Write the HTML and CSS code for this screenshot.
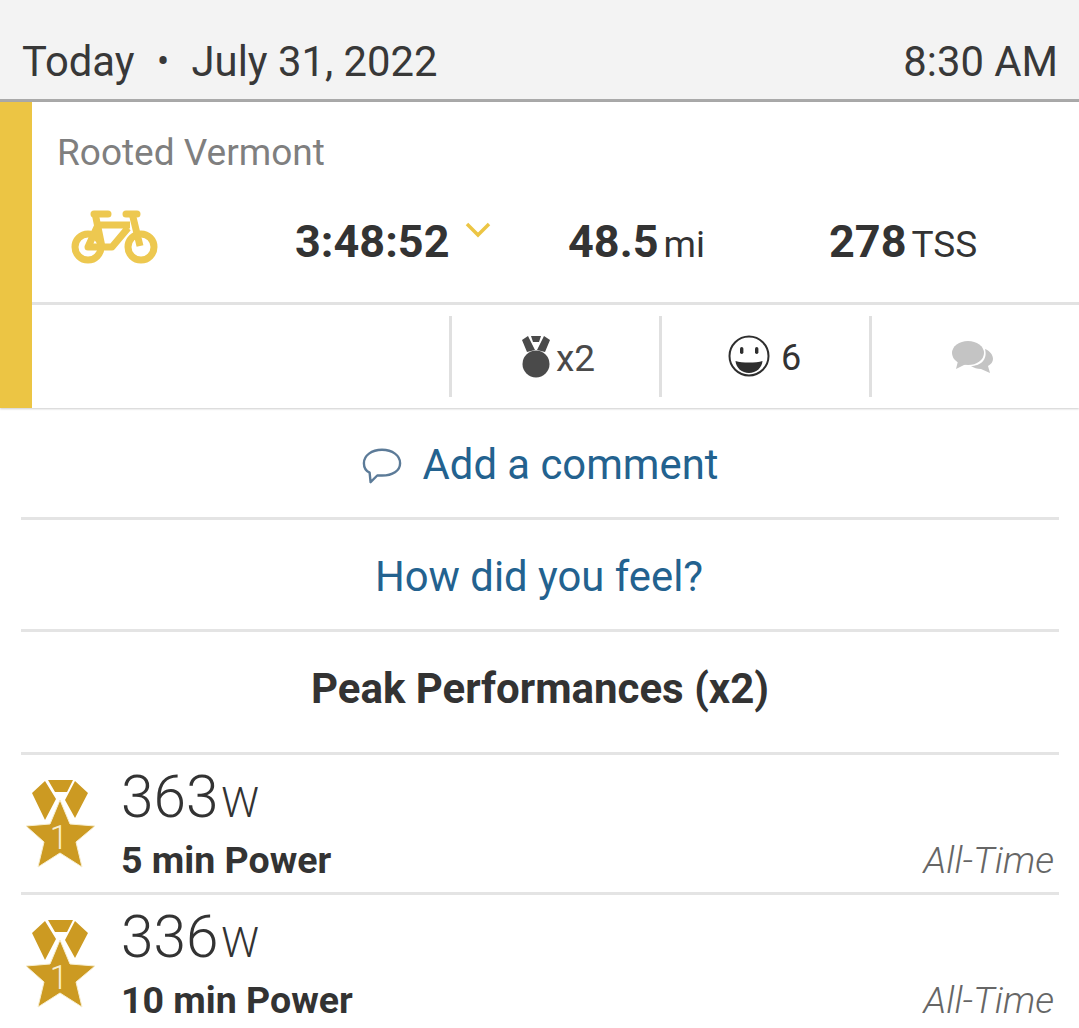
FILE: index.html
```html
<!DOCTYPE html>
<html lang="en">
<head>
<meta charset="utf-8">
<title>Workout</title>
<link rel="stylesheet" href="styles.css">
</head>
<body>
<header class="date-bar">
  <div class="date"><span>Today</span><span class="dot">•</span><span>July 31, 2022</span></div>
  <div>8:30 AM</div>
</header>
<section class="card">
  <div class="card-bar"></div>
  <div class="card-body">
    <div class="title">Rooted Vermont</div>
    <div class="stats">
      <svg class="bike" viewBox="0 0 88 56" aria-hidden="true">
        <g fill="none" stroke="#edc850" stroke-width="7" stroke-linejoin="round">
          <circle cx="17" cy="39" r="13"/>
          <circle cx="70" cy="39" r="13"/>
          <path d="M24 5 L31 39 H17 L27 17 H59 M57 20 L41 39 H17 M61 5 L69 38"/>
        </g>
        <path d="M23 6 H37 M55 6 H66" fill="none" stroke="#edc850" stroke-width="7" stroke-linecap="round"/>
      </svg>
      <div class="stat stat-time"><b>3:48:52</b>
        <svg class="chev" viewBox="0 0 26 16" aria-hidden="true"><path d="M2 2 L13 13 L24 2" fill="none" stroke="#ecc544" stroke-width="3.5"/></svg>
      </div>
      <div class="stat stat-dist"><b>48.5</b><span>mi</span></div>
      <div class="stat stat-tss"><b>278</b><span>TSS</span></div>
    </div>
    <div class="actions">
      <div class="action">
        <svg class="medal" viewBox="0 0 28 42" aria-hidden="true">
          <path d="M0 4 L6 0 L13 14 L5 16 Z M28 4 L22 0 L15 14 L23 16 Z M9 0 H19 L17 6 H11 Z" fill="#4a4a4a"/>
          <ellipse cx="14" cy="28" rx="13.5" ry="13.5" fill="#4a4a4a"/>
        </svg>
        <span class="x2">x2</span>
      </div>
      <div class="action">
        <svg class="smile" viewBox="0 0 42 42" aria-hidden="true">
          <circle cx="21" cy="21" r="19.5" fill="none" stroke="#2e2e2e" stroke-width="2"/>
          <rect x="12" y="12" width="3.4" height="7" rx="1.7" fill="#2e2e2e"/>
          <rect x="27" y="12" width="3.4" height="7" rx="1.7" fill="#2e2e2e"/>
          <path d="M7.500 26 C14 28 28 28 34.500 26 C34 33 28 38 21 38 C14 38 8 33 7.500 26 Z" fill="#2e2e2e"/>
        </svg>
        <span class="six">6</span>
      </div>
      <div class="action">
        <svg class="chat" viewBox="0 0 41 32" aria-hidden="true">
          <path d="M33 8 C38 10 41 14 41 18 C41 21 39 23 36 25 L38 32 L29 28 C25 28 22 27 19 25 C28 25 36 19 33 8 Z" fill="#c4c4c4"/>
          <ellipse cx="16" cy="12" rx="16" ry="12" fill="#c4c4c4"/>
          <path d="M6 20 L4 28 L14 23 Z" fill="#c4c4c4"/>
        </svg>
      </div>
    </div>
  </div>
</section>
<main class="content">
  <div class="link-row comment-row">
    <svg class="bubble" viewBox="0 0 42 38" aria-hidden="true"><path d="M21 2 C32 2 40 8 40 16 C40 24 32 29 21 29 C19 29 18 29 16 29 L9 36 L8 26 C4 24 2 20 2 16 C2 8 10 2 21 2 Z" fill="none" stroke="#5c7b98" stroke-width="2.500" stroke-linejoin="round"/></svg>
    <span>Add a comment</span>
  </div>
  <div class="link-row feel-row">How did you feel?</div>
  <h2 class="peak-title">Peak Performances (x2)</h2>
  <div class="peak">
    <svg class="award" viewBox="0 0 72 92" aria-hidden="true">
      <path d="M24 0 H49 L43 12 H31 Z M21 1 L8 13 L21 40 L32 19 Z M51 1 L64 13 L51 38 L41 20 Z" fill="#cc9a22"/>
      <path d="M36 20 L46 44 L71 46 L52 62 L58 87 L36 73 L14 87 L20 62 L2 46 L26 44 Z" fill="#cc9a22" stroke="#f7eed0" stroke-width="1"/>
      <text x="35" y="69" class="award-num">1</text>
    </svg>
    <div class="peak-main">
      <div class="peak-value">363<span>W</span></div>
      <div class="peak-label-row"><b>5 min Power</b><i>All-Time</i></div>
    </div>
  </div>
  <div class="peak">
    <svg class="award" viewBox="0 0 72 92" aria-hidden="true">
      <path d="M24 0 H49 L43 12 H31 Z M21 1 L8 13 L21 40 L32 19 Z M51 1 L64 13 L51 38 L41 20 Z" fill="#cc9a22"/>
      <path d="M36 20 L46 44 L71 46 L52 62 L58 87 L36 73 L14 87 L20 62 L2 46 L26 44 Z" fill="#cc9a22" stroke="#f7eed0" stroke-width="1"/>
      <text x="35" y="69" class="award-num">1</text>
    </svg>
    <div class="peak-main">
      <div class="peak-value">336<span>W</span></div>
      <div class="peak-label-row"><b>10 min Power</b><i>All-Time</i></div>
    </div>
  </div>
</main>
</body>
</html>
```

FILE: styles.css
```css
* { box-sizing: border-box; }
html, body { margin: 0; height: 100%; overflow: hidden; }
body { background: #fff; color: #333; font-family: Roboto, "Liberation Sans", sans-serif; width: 1079px; height: 1028px; }

.date-bar { height: 102px; background: #f3f3f3; border-bottom: 3px solid #a9a9a9; padding: 38px 21px 0 22px; display: flex; justify-content: space-between; font-size: 41.800px; line-height: 48px; color: #383838; }
.date { display: flex; }
.dot { width: 57px; text-align: center; font-size: 36px; }

.card { display: flex; height: 306px; box-shadow: 0 1px 2px rgba(0,0,0,.2); }
.card-bar { width: 32px; flex: none; background: #ecc544; }
.card-body { flex: 1; display: flex; flex-direction: column; }
.title { height: 80px; padding: 29px 0 0 25px; font-size: 37px; line-height: 44px; color: #7f7f7f; }
.stats { height: 123px; border-bottom: 3px solid #e2e2e2; display: flex; align-items: center; position: relative; }
.bike { width: 88px; height: 56px; margin-left: 39px; flex: none; margin-top: -13px; }
.stat { font-size: 37px; line-height: 44px; flex: none; display: flex; align-items: baseline; margin-top: 3px; }
.stat b { font-size: 45px; font-weight: 700; }
.stat span { margin-left: 5px; }
.stat-time { margin-left: 136px; width: 273px; position: relative; margin-top: -1px; }
.chev { position: absolute; left: 170px; top: 2px; width: 26px; height: 16px; }
.stat-dist { width: 261px; }
.actions { flex: 1; display: flex; padding: 11px 0 11px 417px; }
.action { width: 210px; border-left: 3px solid #e0e0e0; display: flex; align-items: center; justify-content: center; padding-top: 3px; }
.medal { width: 28px; height: 42px; margin-right: 6px; margin-left: 6px; margin-top: -2px; }
.x2 { font-size: 37px; color: #4a4a4a; }
.smile { width: 42px; height: 42px; margin-right: 11px; margin-left: -2px; margin-top: -4px; }
.six { font-size: 36px; }
.chat { width: 41px; height: 32px; margin-right: 7px; margin-top: -2px; }

.content { padding: 2px 20px 0 21px; }
.link-row { display: flex; align-items: center; justify-content: center; border-bottom: 3px solid #e4e4e4; color: #23628f; font-size: 41.800px; }
.comment-row { height: 110px; gap: 21px; padding-top: 2px; }
.bubble { width: 40px; height: 38px; flex: none; margin-top: 2px; }
.feel-row { height: 112px; padding: 3px 2px 0 0; }
.peak-title { margin: 0; height: 123px; border-bottom: 3px solid #e4e4e4; display: flex; align-items: center; justify-content: center; font-size: 42px; font-weight: 700; color: #333; padding-bottom: 8px; }
.peak { height: 140px; display: flex; border-bottom: 3px solid #e4e4e4; padding: 25px 5px 0 3px; }
.peak:last-child { border-bottom: 0; }
.award { width: 72px; height: 92px; flex: none; }
.award-num { fill: #f7eed0; font-family: Roboto, sans-serif; font-size: 33px; font-weight: 300; text-anchor: middle; }
.peak-main { flex: 1; margin-left: 25px; margin-top: -18px; }
.peak-value { font-size: 58.500px; line-height: 70px; font-weight: 300; color: #333; }
.peak-value span { font-size: 42px; margin-left: 3px; }
.peak-label-row { display: flex; justify-content: space-between; align-items: baseline; font-size: 37.500px; line-height: 42px; margin-top: 1px; }
.peak-label-row b { font-weight: 700; }
.peak-label-row i { font-weight: 300; color: #666; }
```
